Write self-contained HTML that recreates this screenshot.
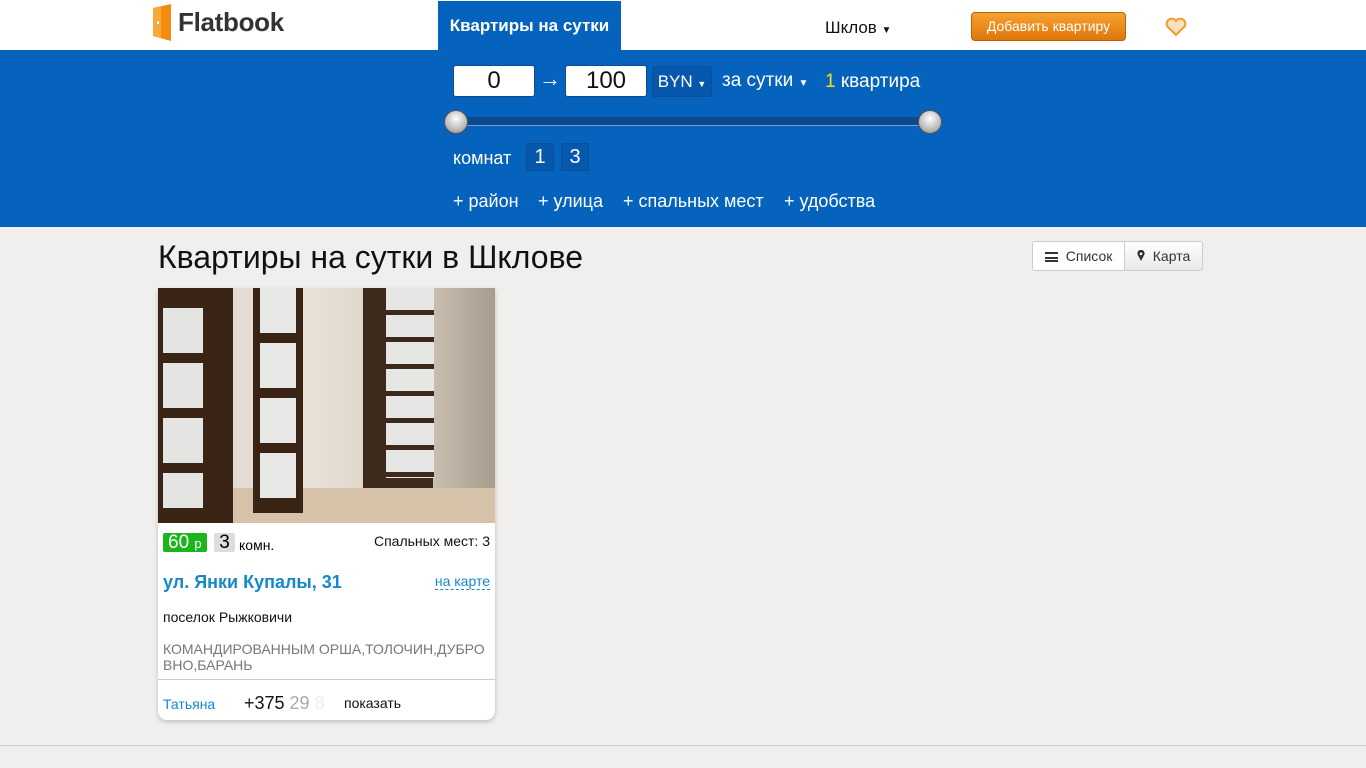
<!DOCTYPE html>
<html><head><meta charset="utf-8"><style>
*{margin:0;padding:0;box-sizing:border-box}
body{width:1366px;height:768px;overflow:hidden;background:#f0efed;font-family:"Liberation Sans",sans-serif;position:relative}
.a{position:absolute}
.top{left:0;top:0;width:1366px;height:50px;background:#fff}
.blue{left:0;top:50px;width:1366px;height:177px;background:#0563be}
.inp{background:#fff;border:1px solid #0a4c94;border-radius:3px;height:32px;font-size:24px;text-align:center;line-height:30px;color:#111}
.w{color:#fff}
.rb{border:1px solid #0d4f96;background:#0758ad;border-radius:2px;color:#fff;font-size:20px;text-align:center;line-height:26px}
.knob{width:24px;height:24px;border-radius:50%;background:radial-gradient(circle at 50% 35%,#fff,#bbb 60%,#888);border:1px solid #555}
</style></head><body>
<div class="a top"></div>
<svg class="a" style="left:153px;top:4px" width="18" height="37"><polygon points="0,4 18,0 18,37 0,32" fill="#f28c0f"/><polygon points="0,4 8,3 8,34 0,32" fill="#f7a93a"/><rect x="4" y="17" width="2" height="3" fill="#fff"/></svg>
<div class="a" style="left:178px;top:7px;font-size:26px;font-weight:bold;color:#333;letter-spacing:-0.3px">Flatbook</div>
<div class="a" style="left:438px;top:1px;width:183px;height:49px;background:#0563be;color:#fff;font-weight:bold;font-size:17px;text-align:center;line-height:49px">Квартиры на сутки</div>
<div class="a" style="left:825px;top:18px;font-size:17px;color:#111">Шклов <span style="font-size:10px">▼</span></div>
<div class="a" style="left:971px;top:12px;width:155px;height:29px;border-radius:4px;background:linear-gradient(#f7a132,#e0760a);border:1px solid #b8620c;color:#fff;font-size:14px;text-align:center;line-height:27px">Добавить квартиру</div>
<svg class="a" style="left:1165px;top:17px" width="22" height="20" viewBox="0 0 22 20"><path d="M11 18 L2.5 9.5 A4.8 4.8 0 0 1 11 4 A4.8 4.8 0 0 1 19.5 9.5 Z" fill="#fde0c0" stroke="#f29a2e" stroke-width="2"/></svg>
<div class="a blue"></div>
<div class="a inp" style="left:453px;top:65px;width:82px">0</div>
<div class="a w" style="left:539px;top:66px;font-size:22px">→</div>
<div class="a inp" style="left:565px;top:65px;width:82px">100</div>
<div class="a rb" style="left:652px;top:66px;width:60px;height:31px;font-size:17px;line-height:29px">BYN <span style="font-size:9px">▼</span></div>
<div class="a w" style="left:722px;top:70px;font-size:19px">за сутки <span style="font-size:10px">▼</span></div>
<div class="a w" style="left:825px;top:71px;font-size:19px"><span style="color:#ffd91a">1</span> квартира</div>
<div class="a" style="left:456px;top:117px;width:474px;height:9px;background:#0d4a8c;border-bottom:1px solid #6f9fd6"></div>
<div class="a knob" style="left:444px;top:110px"></div>
<div class="a knob" style="left:918px;top:110px"></div>
<div class="a w" style="left:453px;top:148px;font-size:18px">комнат</div>
<div class="a rb" style="left:526px;top:143px;width:28px;height:28px">1</div>
<div class="a rb" style="left:561px;top:143px;width:28px;height:28px">3</div>
<div class="a w" style="left:453px;top:191px;font-size:18px">+ район</div>
<div class="a w" style="left:538px;top:191px;font-size:18px">+ улица</div>
<div class="a w" style="left:623px;top:191px;font-size:18px">+ спальных мест</div>
<div class="a w" style="left:784px;top:191px;font-size:18px">+ удобства</div>
<div class="a" style="left:158px;top:239px;font-size:32px;color:#111">Квартиры на сутки в Шклове</div>
<div class="a" style="left:1032px;top:241px;width:93px;height:30px;background:#fff;border:1px solid #ccc;border-radius:3px 0 0 3px;font-size:14px;color:#333;line-height:28px;padding-left:12px"><span style="display:inline-block;width:13px;height:10px;border-top:2px solid #333;border-bottom:2px solid #333;position:relative;top:1px;background:linear-gradient(#fff 3px,#333 3px,#333 5px,#fff 5px)"></span>&nbsp; Список</div>
<div class="a" style="left:1124px;top:241px;width:79px;height:30px;background:linear-gradient(#fff,#e8e8e8);border:1px solid #ccc;border-radius:0 3px 3px 0;font-size:14px;color:#333;line-height:28px;padding-left:12px"><svg width="8" height="11" viewBox="0 0 8 11"><path d="M4 11 L0.8 5 A3.6 3.6 0 1 1 7.2 5 Z" fill="#333"/><circle cx="4" cy="3.8" r="1.3" fill="#fff"/></svg>&nbsp; Карта</div>
<div class="a" style="left:158px;top:288px;width:337px;height:432px;background:#fff;border-radius:0 0 9px 9px;box-shadow:0 2px 5px rgba(0,0,0,.2);overflow:hidden">
 <div class="a" style="left:0;top:0;width:337px;height:235px;background:linear-gradient(90deg,#d8cfc5,#ebe4da 40%,#ddd3c6 70%,#a89c8e)"></div>
 <div class="a" style="left:0;top:200px;width:337px;height:35px;background:#d5c2a8"></div>
 <div class="a" style="left:0;top:0;width:75px;height:235px;background:#3a2416"></div>
 <div class="a" style="left:5px;top:20px;width:40px;height:200px;background:repeating-linear-gradient(#e4e4e2 0 45px,#3a2416 45px 55px)"></div>
 <div class="a" style="left:95px;top:0;width:50px;height:225px;background:#3a2416"></div>
 <div class="a" style="left:102px;top:0;width:36px;height:215px;background:repeating-linear-gradient(#e8e8e6 0 45px,#3a2416 45px 55px)"></div>
 <div class="a" style="left:205px;top:0;width:70px;height:200px;background:#3e2a1c"></div>
 <div class="a" style="left:228px;top:0;width:48px;height:190px;background:repeating-linear-gradient(#e6e6e4 0 22px,#3e2a1c 22px 27px)"></div>
 <div class="a" style="left:5px;top:245px;height:19px;padding:0 5px;background:#1db51d;color:#fff;font-size:19px;line-height:19px;border-radius:2px">60 <span style="font-size:13px">р</span></div>
 <div class="a" style="left:56px;top:245px;width:21px;height:19px;background:#ddd;font-size:19px;line-height:19px;text-align:center;border-radius:2px">3</div>
 <div class="a" style="left:81px;top:249px;font-size:14px">комн.</div>
 <div class="a" style="right:5px;top:245px;font-size:14px;color:#111">Спальных мест: 3</div>
 <div class="a" style="left:5px;top:284px;font-size:18px;font-weight:bold;color:#1588cc">ул. Янки Купалы, 31</div>
 <div class="a" style="right:5px;top:285px;font-size:14px;color:#1588cc;border-bottom:1px dashed #1588cc">на карте</div>
 <div class="a" style="left:5px;top:321px;font-size:14px;color:#111">поселок Рыжковичи</div>
 <div class="a" style="left:5px;top:353px;width:330px;font-size:14px;color:#777;line-height:16px">КОМАНДИРОВАННЫМ ОРША,ТОЛОЧИН,ДУБРО ВНО,БАРАНЬ</div>
 <div class="a" style="left:0;top:391px;width:337px;border-top:1px solid #ccc"></div>
 <div class="a" style="left:5px;top:408px;font-size:14px;color:#1588cc">Татьяна</div>
 <div class="a" style="left:86px;top:405px;font-size:18px;color:#111">+375 <span style="color:#aaa">29</span> <span style="color:#eee">8</span></div>
 <div class="a" style="left:186px;top:407px;font-size:14px;color:#111">показать</div>
</div>
<div class="a" style="left:0;top:745px;width:1366px;border-top:1px solid #ccc"></div>
</body></html>
